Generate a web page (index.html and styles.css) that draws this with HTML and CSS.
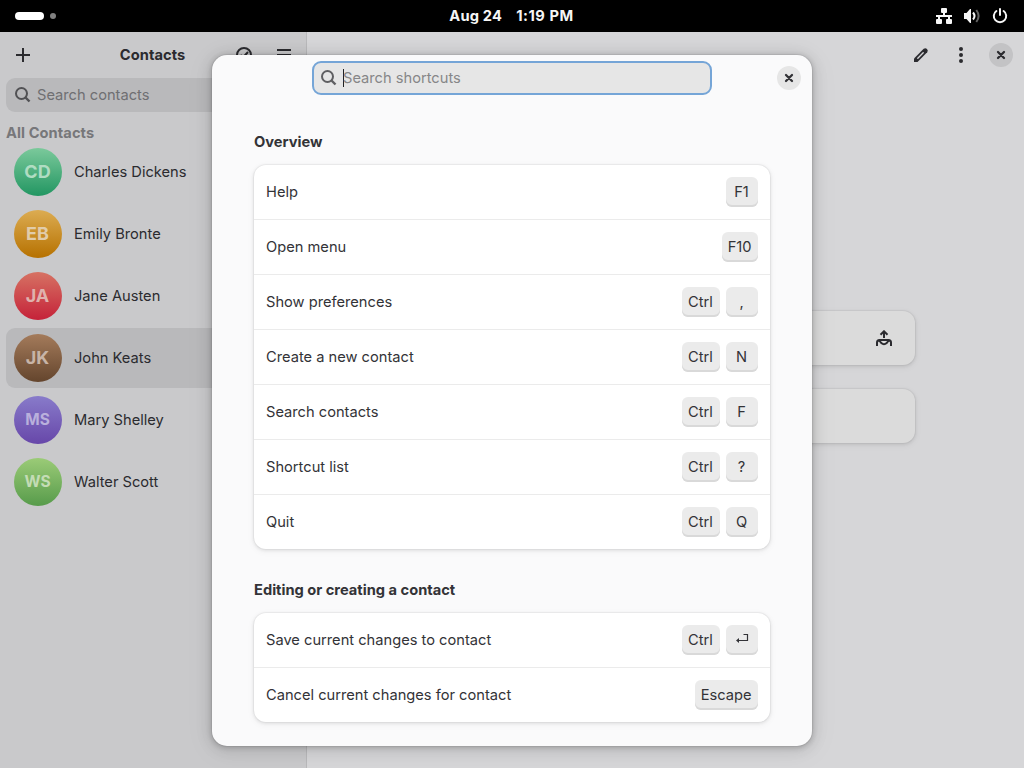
FILE: index.html
```html
<!DOCTYPE html>
<html lang="en">
<head>
<meta charset="utf-8">
<title>Contacts</title>
<link rel="stylesheet" href="styles.css">
</head>
<body>
<header class="topbar">
  <div class="workspaces"><span class="pill"></span><span class="dot"></span></div>
  <div class="clock"><span>Aug 24</span><span class="time">1:19 PM</span></div>
  <div class="status">
    <svg width="16" height="16" viewBox="0 0 16 16" fill="currentColor"><path d="M6 0h4a1 1 0 0 1 1 1v3a1 1 0 0 1-1 1H9v2h7v2h-2v2h1a1 1 0 0 1 1 1v3a1 1 0 0 1-1 1h-4a1 1 0 0 1-1-1v-3a1 1 0 0 1 1-1h1V9H4v2h1a1 1 0 0 1 1 1v3a1 1 0 0 1-1 1H1a1 1 0 0 1-1-1v-3a1 1 0 0 1 1-1h1V9H0V7h7V5H6a1 1 0 0 1-1-1V1a1 1 0 0 1 1-1z"/></svg>
    <svg width="16" height="16" viewBox="0 0 16 16" fill="none" stroke="currentColor" stroke-width="2"><path d="M0 5h2.500L6 1h1v14H6l-3.500-4H0z" fill="currentColor" stroke="none"/><path d="M9 4.500q3 3.500 0 7"/><path d="M12.300 2q4.600 6 0 12" opacity=".4"/></svg>
    <svg width="16" height="16" viewBox="0 0 16 16" fill="none" stroke="currentColor" stroke-width="2" stroke-linecap="round"><path d="M4.400 3a6.200 6.200 0 1 0 7.200 0M8 1v6"/></svg>
  </div>
</header>
<main class="window">
  <aside class="sidebar">
    <div class="sidebar-header">
      <svg class="icon add" width="16" height="16" viewBox="0 0 16 16"><path d="M8 1v14M1 8h14" stroke="currentColor" stroke-width="2"/></svg>
      <h1>Contacts</h1>
      <div class="sidebar-tools">
        <svg width="16" height="16" viewBox="0 0 16 16" fill="none" stroke="currentColor" stroke-width="2"><circle cx="8" cy="8" r="7"/><path d="M4.500 8l2.500 2.500L12 5"/></svg>
        <svg width="16" height="16" viewBox="0 0 16 16" stroke="currentColor" stroke-width="2"><path d="M1 3h14M1 8h14M1 13h14"/></svg>
      </div>
    </div>
    <div class="search">
      <svg width="16" height="16" viewBox="0 0 16 16" fill="none" stroke="currentColor" stroke-width="2"><circle cx="6.500" cy="6.500" r="5.500"/><path d="M10.500 10.500l4 4" stroke-width="2.400"/></svg>
      <span>Search contacts</span>
    </div>
    <h2 class="list-title">All Contacts</h2>
    <ul class="contacts">
      <li><span class="avatar green">CD</span>Charles Dickens</li>
      <li><span class="avatar orange">EB</span>Emily Bronte</li>
      <li><span class="avatar red">JA</span>Jane Austen</li>
      <li class="selected"><span class="avatar brown">JK</span>John Keats</li>
      <li><span class="avatar purple small">MS</span>Mary Shelley</li>
      <li><span class="avatar lime small">WS</span>Walter Scott</li>
    </ul>
  </aside>
  <section class="content">
    <div class="content-header">
      <svg width="16" height="16" viewBox="0 0 16 16"><path d="M1 15v-3.500L10.700 1.800a2.500 2.500 0 0 1 3.500 3.500L4.500 15z" fill="currentColor"/><path d="M4.800 11.200l5.400-5.400" stroke="#d6d6d8" stroke-width="1.400" stroke-linecap="round"/></svg>
      <svg width="16" height="16" viewBox="0 0 16 16" fill="currentColor"><circle cx="8" cy="2" r="2"/><circle cx="8" cy="8" r="2"/><circle cx="8" cy="14" r="2"/></svg>
      <span class="close dim"><svg width="16" height="16" viewBox="0 0 16 16"><path d="M5 5l6 6M11 5l-6 6" stroke="currentColor" stroke-width="2.300" stroke-linecap="round"/></svg></span>
    </div>
    <div class="cards">
      <div class="card"><svg width="16" height="16" viewBox="0 0 16 16" fill="none" stroke="currentColor" stroke-width="2"><path d="M8 8V1.500M4.500 4.800L8 1.300l3.500 3.500"/><path d="M1 16v-3.500Q1 10 3.500 10h9Q15 10 15 12.500V16M2 10.500q2 .2 3.300 2.500 2.700 2.400 5.400 0 1.300-2.300 3.300-2.500"/></svg></div>
      <div class="card"></div>
    </div>
  </section>
</main>
<div class="dialog" role="dialog">
  <div class="dialog-header">
    <div class="search focused">
      <svg width="16" height="16" viewBox="0 0 16 16" fill="none" stroke="currentColor" stroke-width="2"><circle cx="6.500" cy="6.500" r="5.500"/><path d="M10.500 10.500l4 4" stroke-width="2.400"/></svg>
      <span>Search shortcuts</span>
    </div>
    <span class="close"><svg width="16" height="16" viewBox="0 0 16 16"><path d="M5 5l6 6M11 5l-6 6" stroke="currentColor" stroke-width="2.300" stroke-linecap="round"/></svg></span>
  </div>
  <div class="groups">
    <section>
      <h2>Overview</h2>
      <ul class="shortcuts">
        <li>Help<span class="keys"><kbd>F1</kbd></span></li>
        <li>Open menu<span class="keys"><kbd>F10</kbd></span></li>
        <li>Show preferences<span class="keys"><kbd class="ctrl">Ctrl</kbd><kbd>,</kbd></span></li>
        <li>Create a new contact<span class="keys"><kbd class="ctrl">Ctrl</kbd><kbd>N</kbd></span></li>
        <li>Search contacts<span class="keys"><kbd class="ctrl">Ctrl</kbd><kbd>F</kbd></span></li>
        <li>Shortcut list<span class="keys"><kbd class="ctrl">Ctrl</kbd><kbd>?</kbd></span></li>
        <li>Quit<span class="keys"><kbd class="ctrl">Ctrl</kbd><kbd>Q</kbd></span></li>
      </ul>
    </section>
    <section>
      <h2>Editing or creating a contact</h2>
      <ul class="shortcuts">
        <li>Save current changes to contact<span class="keys"><kbd class="ctrl">Ctrl</kbd><kbd><svg width="14" height="14" viewBox="0 0 14 14"><path d="M8.500 1.500h4v6H3" fill="none" stroke="currentColor" stroke-width="1.200"/><path d="M1 7.500l3-2.500v5z" fill="currentColor"/></svg></kbd></span></li>
        <li>Cancel current changes for contact<span class="keys"><kbd>Escape</kbd></span></li>
      </ul>
    </section>
  </div>
</div>
</body>
</html>
```
FILE: styles.css
```css
* { box-sizing: border-box; }
body {
  margin: 0;
  width: 1024px;
  height: 768px;
  overflow: hidden;
  position: relative;
  font: 14.667px/20px Inter, sans-serif;
  color: #2b2b2f;
}
h1, h2, ul { margin: 0; padding: 0; }
ul { list-style: none; }
h1, h2 { font-size: 14.667px; font-weight: 700; }
svg { display: block; flex: none; }

.topbar {
  height: 32px;
  background: #000;
  color: #fff;
  display: grid;
  grid-template-columns: 1fr auto 1fr;
  align-items: center;
  padding: 0 16px 0 15px;
}
.workspaces { display: flex; align-items: center; gap: 6px; }
.pill { width: 29px; height: 8px; border-radius: 4px; background: #fff; }
.dot { width: 6px; height: 6px; border-radius: 50%; background: #808080; }
.clock { display: flex; gap: 14px; font-weight: 700; letter-spacing: .2px; color: #f6f6f6; }
.time { letter-spacing: .55px; }
.status { display: flex; justify-content: flex-end; gap: 12px; color: #f6f6f6; }

.window { display: flex; height: 736px; }
.sidebar {
  width: 307px;
  padding: 0 6px;
  background: #c9c9cb;
  border-right: 1px solid #b9b9bb;
}
.sidebar-header {
  height: 46px;
  display: grid;
  grid-template-columns: 74px 1fr 74px;
  align-items: center;
  padding: 0 0 0 9px;
}
.sidebar-header h1 { text-align: center; padding-right: 10px; letter-spacing: .06px; }
.sidebar-tools { display: flex; gap: 24px; padding-left: 10px; }
.search {
  display: flex;
  align-items: center;
  gap: 6px;
  height: 34px;
  padding: 0 9px;
  border-radius: 9px;
  background: #b9b9bb;
  color: #515154;
}
.search span { color: #6f6f72; }
.list-title { padding-top: 11px; height: 30px; line-height: 20px; letter-spacing: .07px; color: #77777a; }
.contacts { display: flex; flex-direction: column; gap: 2px; }
.contacts li {
  height: 60px;
  display: flex;
  align-items: center;
  gap: 12px;
  padding: 0 8px;
  border-radius: 9px;
}
.contacts .selected { background: #b9b9bb; }
.avatar {
  width: 48px;
  height: 48px;
  border-radius: 50%;
  display: grid;
  place-items: center;
  font-size: 18px;
  font-weight: 700;
  padding-right: 1px;
}
.small { font-size: 15.500px; }
.green { background: linear-gradient(#7bc99b, #229662); color: #b0dcc2; }
.orange { background: linear-gradient(#dcac52, #b67100); color: #e1ccaa; }
.red { background: linear-gradient(#d67263, #c52239); color: #dfb2ad; }
.brown { background: linear-gradient(#a47b5b, #64452d); color: #c7b4a7; }
.purple { background: linear-gradient(#887bca, #6747a9); color: #b9b0dc; }
.lime { background: linear-gradient(#9bcb77, #579b4b); color: #c4dcb5; }

.content { flex: 1; background: #d6d6d8; }
.content-header {
  height: 46px;
  display: flex;
  align-items: center;
  justify-content: flex-end;
  gap: 24px;
  padding-right: 11px;
}
.close {
  width: 24px;
  height: 24px;
  border-radius: 50%;
  background: #e6e6e6;
  display: grid;
  place-items: center;
}
.dim { background: #c3c3c5; margin-left: -4px; }
.cards {
  width: 499px;
  margin: 233px auto 0;
  display: flex;
  flex-direction: column;
  gap: 24px;
}
.card {
  height: 54px;
  border-radius: 12px;
  background: #dbdbdb;
  box-shadow: 0 0 0 1px #00000008, 0 1px 3px 1px #00000012, 0 2px 6px 2px #00000008;
  display: flex;
  align-items: center;
  justify-content: flex-end;
  padding-right: 23px;
}

.dialog {
  position: absolute;
  left: 212px;
  top: 55px;
  width: 600px;
  height: 691px;
  border-radius: 15px;
  background: #fafafb;
  color: #333337;
  box-shadow: 0 0 0 1px #0000000d, 0 1px 5px 1px #00000028, 0 2px 14px 3px #0000001a, 0 4px 28px 7px #00000008;
}
.dialog-header {
  height: 46px;
  display: grid;
  grid-template-columns: 1fr 400px 1fr;
  align-items: center;
}
.dialog-header .search { grid-column: 2; }
.dialog-header .close { justify-self: end; margin-right: 11px; }
.focused {
  background: #e6e6e6;
  border: 2px solid #75a5d7;
  padding: 0 7px;
  color: #5f5f62;
}
.focused span { box-shadow: inset 1px 0 #222; line-height: 18px; color: #868688; }
.groups { padding: 30px 42px 0; display: flex; flex-direction: column; gap: 30px; }
.groups h2 { height: 34px; line-height: 23px; }
.shortcuts {
  border-radius: 12px;
  background: #fff;
  box-shadow: 0 0 0 1px #00000008, 0 1px 3px 1px #00000012, 0 2px 6px 2px #00000008;
}
.shortcuts li {
  height: 55px;
  display: flex;
  justify-content: space-between;
  align-items: center;
  padding: 0 12px;
  border-bottom: 1px solid #ebebeb;
}
.shortcuts li:last-child { height: 54px; border-bottom: 0; }
.keys { display: flex; gap: 6px; }
kbd {
  font: inherit;
  min-width: 32px;
  height: 30px;
  padding: 0 6.500px 0 5.500px;
  border-radius: 6px;
  background: #ebebeb;
  box-shadow: inset 0 -2px #d9d9d9;
  display: flex;
  align-items: center;
  justify-content: center;
}
.ctrl { width: 38px; }
```
